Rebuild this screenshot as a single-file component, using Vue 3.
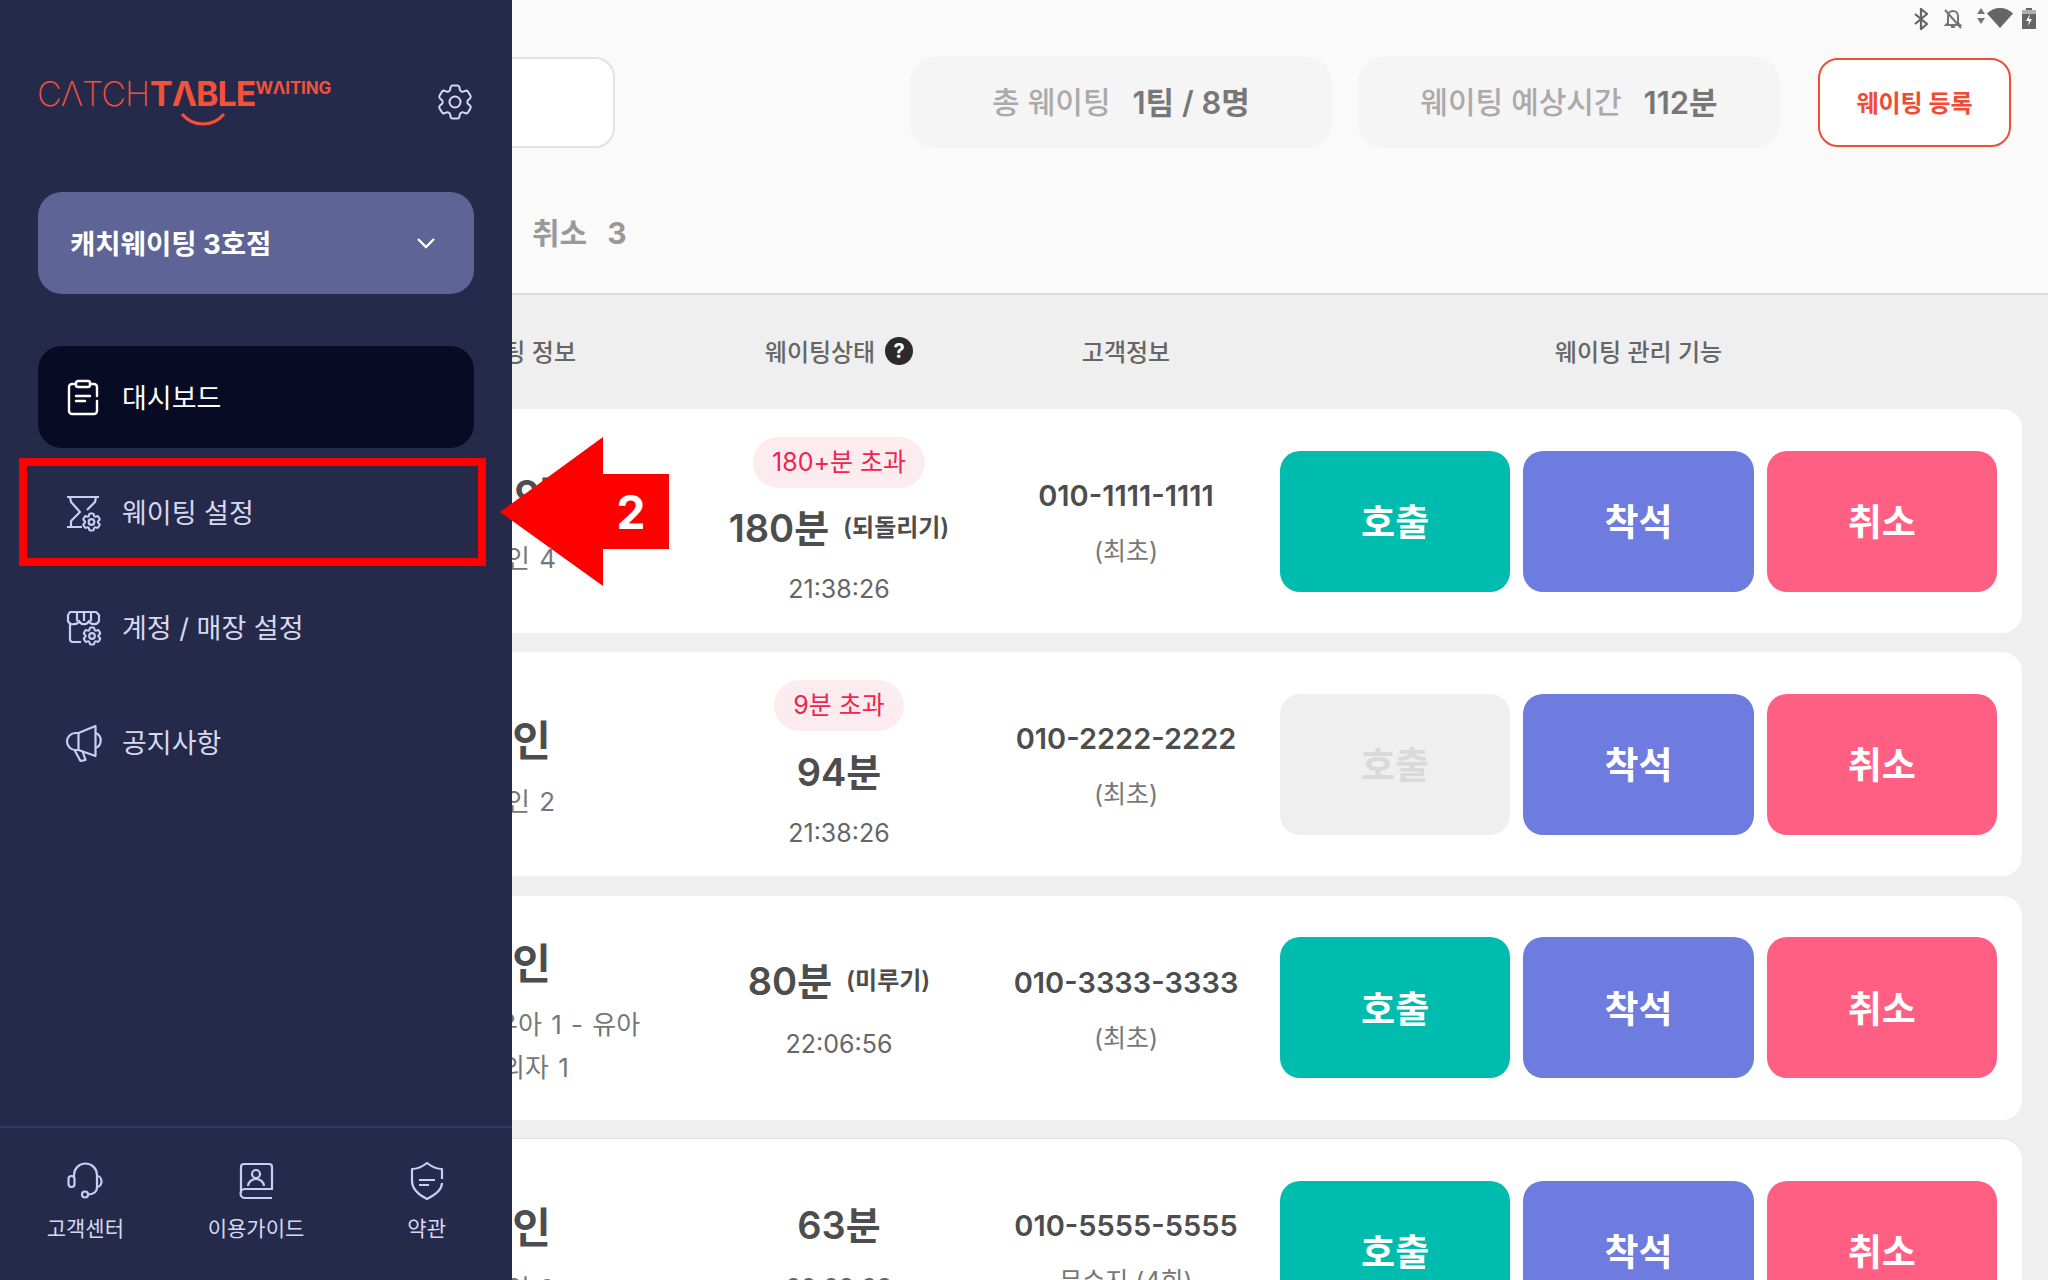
<template>
  <div class="screen">
    <main class="main">
      <header class="top">
        <div class="status-bar">
          <svg width="14" height="22" viewBox="0 0 14 22" fill="none" stroke="#555" stroke-width="2.2">
            <path d="M1 6l12 10-6 5V1l6 5L1 16" />
          </svg>
          <svg class="bell" width="20" height="22" viewBox="0 0 20 22" fill="none" stroke="#666" stroke-width="2">
            <path d="M5 8a5 5 0 0 1 10 0v7l2 2H3l2-2zM8 19h4M2 2l16 18" />
          </svg>
          <svg class="data" width="8" height="16" viewBox="0 0 8 16" fill="#666">
            <path d="M4 0l4 6H0zM4 16L0 10h8z" />
          </svg>
          <svg class="wifi" width="26" height="20" viewBox="0 0 26 20" fill="#555">
            <path d="M0 5.500C3.500 2 8 0 13 0s9.500 2 13 5.500L13 20z" />
          </svg>
          <svg class="battery" width="14" height="21" viewBox="0 0 14 21">
            <path d="M4 0h6v2h4v19H0V2h4z" fill="#555" />
            <path d="M0 2h14v4H0z" fill="#aaa" />
            <path d="M8 6l-4 7h3l-1 5 4-7H7z" fill="#fff" />
          </svg>
        </div>
        <div class="top-row">
          <div class="search"></div>
          <div class="summary summary-first">
            <span class="summary-label">총 웨이팅</span>
            <strong>1팀 / 8명</strong>
          </div>
          <div class="summary">
            <span class="summary-label">웨이팅 예상시간</span>
            <strong>112분</strong>
          </div>
          <button class="register">웨이팅 등록</button>
        </div>
        <div class="tabs">
          <div class="tab">
            <span>취소</span>
            <span>3</span>
          </div>
        </div>
      </header>

      <section class="table">
        <div class="grid head">
          <div class="head-info">웨이팅 정보</div>
          <div class="center">
            웨이팅상태
            <span class="help">?</span>
          </div>
          <div class="center">고객정보</div>
          <div class="center actions-head">웨이팅 관리 기능</div>
        </div>

        <div v-for="row in rows" :key="row.phone" class="grid card">
          <div class="info" :class="{ 'info-up': row.details.length > 1 }">
            <div class="party">{{ row.party }}</div>
            <div
              v-for="line in row.details"
              :key="line.text"
              class="detail"
              :style="{ paddingLeft: line.indent + 'px' }"
            >
              {{ line.text }}
            </div>
          </div>
          <div class="state" :class="{ 'no-pill': !row.pill }">
            <span v-if="row.pill" class="pill">{{ row.pill }}</span>
            <div class="wait">
              <span>{{ row.wait }}</span>
              <span v-if="row.note" class="note">{{ row.note }}</span>
            </div>
            <div class="time">{{ row.time }}</div>
          </div>
          <div class="customer">
            <div class="phone">{{ row.phone }}</div>
            <div class="visit">{{ row.visit }}</div>
          </div>
          <div class="actions">
            <button class="act call" :class="{ off: row.noCall }">호출</button>
            <button class="act seat">착석</button>
            <button class="act cancel">취소</button>
          </div>
        </div>
      </section>
    </main>

    <aside class="side">
      <div class="brand">
        <div class="logo" aria-label="CATCHTABLE WAITING">
          <div class="logo-text">
            <span class="logo-thin">CΛTCH</span>
            <span class="logo-bold">TΛBLE</span>
            <span class="logo-small">WΛITING</span>
          </div>
          <svg class="smile" width="46" height="14" viewBox="0 0 46 14" fill="none" stroke="#f4503a" stroke-width="3">
            <path d="M2 2c5 6 12 10 21 10s16-4 21-10" />
          </svg>
        </div>
        <svg class="cog" width="44" height="44" viewBox="0 0 24 24" fill="none" stroke="#d5d9f2" stroke-width="1.100">
          <path :d="gear" />
          <circle cx="12" cy="12" r="3" />
        </svg>
      </div>

      <div class="store">
        <span class="store-name">캐치웨이팅 3호점</span>
        <svg width="20" height="12" viewBox="0 0 20 12" fill="none" stroke="#fff" stroke-width="2.400">
          <path d="M2 2l8 8 8-8" />
        </svg>
      </div>

      <nav class="menu">
        <a class="menu-item active">
          <svg width="40" height="40" viewBox="0 0 40 40" fill="none" stroke="#fff" stroke-width="2.400" stroke-linecap="round" stroke-linejoin="round">
            <path d="M13 7H9a3 3 0 0 0-3 3v24a3 3 0 0 0 3 3h22a3 3 0 0 0 3-3V24M34 19v-9a3 3 0 0 0-3-3h-4" />
            <rect x="13" y="4" width="14" height="6" rx="2" />
            <path d="M13 19h14M13 24h9" />
          </svg>
          <span class="menu-label">대시보드</span>
        </a>
        <a class="menu-item">
          <svg width="40" height="40" viewBox="0 0 40 40" fill="none" stroke="#c9cdf0" stroke-width="2.200" stroke-linejoin="round">
            <path d="M4 5h32M7 5l1 5 9 10-9 9v6M33 5l-1 5-8 8M4 35h15" />
            <g transform="translate(17.100 18.600) scale(0.950)">
              <path :d="gear" />
              <circle cx="12" cy="12" r="3" />
            </g>
          </svg>
          <span class="menu-label">웨이팅 설정</span>
        </a>
        <a class="menu-item">
          <svg width="40" height="40" viewBox="0 0 40 40" fill="none" stroke="#c9cdf0" stroke-width="2.200" stroke-linejoin="round">
            <path d="M7 5h26l3 3v6a5 5 0 0 1-5 3 5 5 0 0 1-5-3 5 5 0 0 1-5 3 5 5 0 0 1-5-3 5 5 0 0 1-5 3 5 5 0 0 1-6-3V8zM14 5v9M21 5v9M28 5v9" />
            <path d="M7 17v15a3 3 0 0 0 3 3h8" />
            <g transform="translate(17.600 17.600) scale(0.950)">
              <path :d="gear" />
              <circle cx="12" cy="12" r="3" />
            </g>
          </svg>
          <span class="menu-label">계정 / 매장 설정</span>
        </a>
        <a class="menu-item">
          <svg width="40" height="40" viewBox="0 0 40 40" fill="none" stroke="#c9cdf0" stroke-width="2.200" stroke-linejoin="round">
            <g transform="translate(2.500 0)">
              <path d="M30 4L13 11h-3a8.500 8.500 0 0 0 0 17h3l17 6z" />
              <path d="M30 11a8 8 0 0 1 0 15M13 11v17" />
              <path d="M9 28l6 11 5-1-3-9" />
            </g>
          </svg>
          <span class="menu-label">공지사항</span>
        </a>
      </nav>

      <footer class="side-foot">
        <div class="foot-item">
          <svg width="40" height="40" viewBox="0 0 40 40" fill="none" stroke="#c9cdf0" stroke-width="2.200">
            <path d="M9 16v-2a11.500 11.500 0 0 1 23 0v2" />
            <rect x="3.500" y="15" width="6" height="11" rx="3" />
            <path d="M32 15a4.500 5.500 0 0 1 0 11" />
            <path d="M32 15v11c0 5-4 7.500-9 7.500" />
            <circle cx="20" cy="33.500" r="3" />
          </svg>
          <span>고객센터</span>
        </div>
        <div class="foot-item">
          <svg width="40" height="40" viewBox="0 0 40 40" fill="none" stroke="#c9cdf0" stroke-width="2.200">
            <path d="M5 32V6a3 3 0 0 1 3-3h25a3 3 0 0 1 3 3v22H9a4.500 4.500 0 0 0 0 9h27" />
            <circle cx="20" cy="13" r="4" />
            <path d="M12 25a8 7 0 0 1 16 0" />
          </svg>
          <span>이용가이드</span>
        </div>
        <div class="foot-item">
          <svg width="40" height="40" viewBox="0 0 40 40" fill="none" stroke="#c9cdf0" stroke-width="2.200" stroke-linejoin="round">
            <path d="M35 18V8c-6 0-10-2-15-6-5 4-9 6-15 6v12c0 9 7 14 15 18 8-4 15-9 15-16" />
            <path d="M12 19h16M12 24h10" />
          </svg>
          <span>약관</span>
        </div>
      </footer>
    </aside>

    <div class="mark"></div>
    <div class="arrow">
      <svg width="170" height="150" viewBox="0 0 170 150">
        <polygon points="0,75 103,0 103,37 169,37 169,112 103,112 103,149" fill="#ff0000" />
      </svg>
      <span class="arrow-num">2</span>
    </div>
  </div>
</template>

<script setup>
// heroicons 스타일 톱니바퀴, 메뉴 아이콘에서도 같이 쓴다
const gear =
  'M9.594 3.94c.09-.542.56-.94 1.11-.94h2.593c.55 0 1.02.398 1.11.94l.213 1.281c.063.374.313.686.645.87.074.04.147.083.22.127.325.196.72.257 1.075.124l1.217-.456a1.125 1.125 0 0 1 1.37.49l1.296 2.247a1.125 1.125 0 0 1-.26 1.431l-1.003.827c-.293.241-.438.613-.43.992a7.723 7.723 0 0 1 0 .255c-.008.378.137.75.43.991l1.004.827c.424.35.534.955.26 1.43l-1.298 2.247a1.125 1.125 0 0 1-1.369.491l-1.217-.456c-.355-.133-.75-.072-1.076.124a6.47 6.47 0 0 1-.22.128c-.331.183-.581.495-.644.869l-.213 1.281c-.09.543-.56.94-1.11.94h-2.594c-.55 0-1.019-.398-1.11-.94l-.213-1.281c-.062-.374-.312-.686-.644-.87a6.52 6.52 0 0 1-.22-.127c-.325-.196-.72-.257-1.076-.124l-1.217.456a1.125 1.125 0 0 1-1.369-.49l-1.297-2.247a1.125 1.125 0 0 1 .26-1.431l1.004-.827c.292-.24.437-.613.43-.991a6.932 6.932 0 0 1 0-.255c.007-.38-.138-.751-.43-.992l-1.004-.827a1.125 1.125 0 0 1-.26-1.43l1.297-2.247a1.125 1.125 0 0 1 1.37-.491l1.216.456c.356.133.751.072 1.076-.124.072-.044.146-.086.22-.128.332-.183.582-.495.644-.869l.214-1.28Z'

const rows = [
  {
    party: '4인',
    details: [{ text: '성인 4', indent: 0 }],
    pill: '180+분 초과',
    wait: '180분',
    note: '(되돌리기)',
    time: '21:38:26',
    phone: '010-1111-1111',
    visit: '(최초)'
  },
  {
    party: '2인',
    details: [{ text: '성인 2', indent: 0 }],
    pill: '9분 초과',
    wait: '94분',
    time: '21:38:26',
    phone: '010-2222-2222',
    visit: '(최초)',
    noCall: true
  },
  {
    party: '2인',
    details: [
      { text: '유아 1 - 유아', indent: 12 },
      { text: '의자 1', indent: 19 }
    ],
    wait: '80분',
    note: '(미루기)',
    time: '22:06:56',
    phone: '010-3333-3333',
    visit: '(최초)'
  },
  {
    party: '2인',
    details: [{ text: '성인 2', indent: 0 }],
    wait: '63분',
    time: '22:23:23',
    phone: '010-5555-5555',
    visit: '무수지 (4회)'
  }
]
</script>

<style>
html,
body {
  margin: 0;
  background: #efefef;
}
</style>

<style scoped>
.screen {
  position: relative;
  width: 2048px;
  height: 1280px;
  overflow: hidden;
  font-family: Inter, 'Noto Sans CJK KR', sans-serif;
  color: #4d4d4d;
  background: #efefef;
}

button {
  font-family: inherit;
  cursor: pointer;
}

.top {
  height: 293px;
  background: #fafafa;
  border-bottom: 2px solid #dcdcdc;
}

.status-bar {
  display: flex;
  align-items: flex-start;
  justify-content: flex-end;
  height: 57px;
  box-sizing: border-box;
  padding: 8px 12px 0 0;
  opacity: 0.9;
}

.bell {
  margin-left: 15px;
}

.data {
  margin-left: 14px;
}

.wifi {
  margin-left: 2px;
}

.battery {
  margin-left: 9px;
}

.top-row {
  display: flex;
  align-items: stretch;
  height: 91px;
  padding-left: 20px;
}

.search {
  width: 595px;
  box-sizing: border-box;
  background: #fff;
  border: 2px solid #e2e2e2;
  border-radius: 20px;
}

.summary {
  display: flex;
  align-items: center;
  justify-content: center;
  gap: 22px;
  width: 422px;
  margin-left: 26px;
  padding-bottom: 5px;
  box-sizing: border-box;
  border-radius: 24px;
  background: #f5f5f5;
  font-size: 30px;
  font-weight: 500;
  color: #777;
}

.summary-first {
  margin-left: 295px;
}

.summary-label {
  color: #aaa;
}

.summary strong {
  font-size: 31px;
  font-weight: 600;
}

.register {
  width: 193px;
  margin: 1px 0 1px 38px;
  padding-bottom: 3px;
  box-sizing: border-box;
  border: 2px solid #ef4d36;
  border-radius: 20px;
  background: #fff;
  font-size: 24px;
  font-weight: 700;
  color: #f04b35;
}

.tabs {
  display: flex;
  padding: 65px 0 0 532px;
}

.tab {
  display: flex;
  gap: 20px;
  font-size: 30px;
  line-height: 40px;
  font-weight: 700;
  color: #999;
}

.grid {
  display: grid;
  grid-template-columns: 680px 278px 296px 723px;
  margin: 0 26px 0 20px;
}

.head {
  align-items: center;
  height: 114px;
  box-sizing: border-box;
  padding-bottom: 4px;
  font-size: 24px;
  font-weight: 500;
  color: #666;
}

.head-info {
  text-align: right;
  padding-right: 124px;
}

.center {
  display: flex;
  align-items: center;
  justify-content: center;
  gap: 10px;
}

.actions-head {
  padding-left: 6px;
}

.help {
  display: flex;
  align-items: center;
  justify-content: center;
  width: 28px;
  height: 28px;
  margin-top: 2px;
  border-radius: 50%;
  background: #2b2b2b;
  color: #fff;
  font-size: 20px;
  font-weight: 700;
}

.card {
  height: 224px;
  margin-bottom: 19.400px;
  border-radius: 20px;
  background: #fff;
  align-items: center;
}

.card:last-child {
  box-shadow: 0 -1px 0 #e2e2e2;
}

.info {
  box-sizing: border-box;
  height: 224px;
  padding: 65px 0 0 462px;
}

.info-up {
  padding-top: 44px;
}

.party {
  padding-left: 4px;
  font-size: 42px;
  line-height: 48px;
  font-weight: 600;
  margin-bottom: 15px;
}

.detail {
  font-size: 26px;
  line-height: 43px;
  word-spacing: 2px;
  color: #777;
  white-space: nowrap;
}

.state {
  display: flex;
  flex-direction: column;
  align-items: center;
}

.state.no-pill {
  padding-top: 2px;
}

.state.no-pill .time {
  margin-top: 23px;
}

.pill {
  height: 51px;
  padding: 0 19px;
  margin: 0 0 16.500px;
  border-radius: 26px;
  background: #fdecef;
  color: #ef2450;
  font-size: 25px;
  line-height: 51px;
}

.wait {
  display: flex;
  align-items: center;
  gap: 14px;
  font-size: 38px;
  line-height: 48px;
  font-weight: 600;
  white-space: nowrap;
}

.note {
  font-size: 24px;
  font-weight: 600;
}

.time {
  margin-top: 21px;
  font-size: 25px;
  line-height: 32px;
  color: #666;
}

.customer {
  padding-top: 3px;
  text-align: center;
}

.phone {
  font-size: 29px;
  line-height: 36px;
  font-weight: 600;
}

.visit {
  margin-top: 21px;
  font-size: 25px;
  line-height: 32px;
  color: #777;
}

.actions {
  display: flex;
  gap: 13px;
  padding-left: 6px;
}

.act {
  width: 230.500px;
  height: 141px;
  padding-bottom: 3px;
  border: 0;
  border-radius: 20px;
  color: #fff;
  font-size: 37px;
  font-weight: 700;
}

.call {
  background: #00bcae;
}

.call.off {
  background: #efefef;
  color: #d9d9d9;
}

.seat {
  background: #6e7bdf;
}

.cancel {
  background: #ff5f82;
}

.side {
  position: absolute;
  top: 0;
  left: 0;
  display: flex;
  flex-direction: column;
  width: 512px;
  height: 1280px;
  background: #252a4a;
}

.brand {
  display: flex;
  justify-content: space-between;
  height: 192px;
  box-sizing: border-box;
  padding: 77px 34px 0 37px;
}

.logo-text {
  display: flex;
  align-items: flex-start;
  color: #f4503a;
  height: 34px;
  line-height: 34px;
  white-space: nowrap;
}

.logo-thin {
  font-size: 34px;
  font-weight: 200;
  letter-spacing: -1px;
}

.logo-bold {
  margin-left: 1px;
  font-size: 34px;
  font-weight: 700;
  letter-spacing: -1px;
}

.logo-small {
  font-size: 17px;
  line-height: 22px;
  font-weight: 700;
  letter-spacing: -0.200px;
}

.smile {
  display: block;
  margin: 1px 0 0 143px;
}

.cog {
  margin: 3px 1px 0 0;
}

.store {
  display: flex;
  align-items: center;
  justify-content: space-between;
  height: 102px;
  margin: 0 38px;
  padding: 0 38px 0 32px;
  border-radius: 24px;
  background: #5f6496;
  color: #fff;
  font-size: 27.500px;
  font-weight: 700;
}

.store-name {
  margin-top: -2px;
}

.menu {
  display: flex;
  flex-direction: column;
  gap: 13px;
  margin: 52px 38px 0;
}

.menu-item {
  display: flex;
  align-items: center;
  gap: 19px;
  height: 102px;
  padding-left: 25px;
  border-radius: 24px;
  color: #d5d9f2;
  font-size: 27px;
}

.menu-label {
  margin-top: -2px;
}

.menu-item.active {
  background: #070c24;
  color: #fff;
}

.side-foot {
  display: grid;
  grid-template-columns: repeat(3, 1fr);
  margin-top: auto;
  height: 154px;
  box-sizing: border-box;
  padding-top: 33px;
  border-top: 2px solid #353a5c;
}

.foot-item {
  display: flex;
  flex-direction: column;
  align-items: center;
  gap: 14px;
  color: #d5d9f2;
  font-size: 21px;
  line-height: 28px;
}

.mark {
  position: absolute;
  left: 19px;
  top: 458px;
  width: 467px;
  height: 108px;
  box-sizing: border-box;
  border: 8px solid #ff0000;
}

.arrow {
  position: absolute;
  left: 500px;
  top: 437px;
  width: 170px;
  height: 150px;
}

.arrow svg {
  display: block;
}

.arrow-num {
  position: absolute;
  left: 102px;
  right: 10px;
  top: 47px;
  text-align: center;
  color: #fff;
  font-size: 46px;
  line-height: 56px;
  font-weight: 700;
}
</style>
